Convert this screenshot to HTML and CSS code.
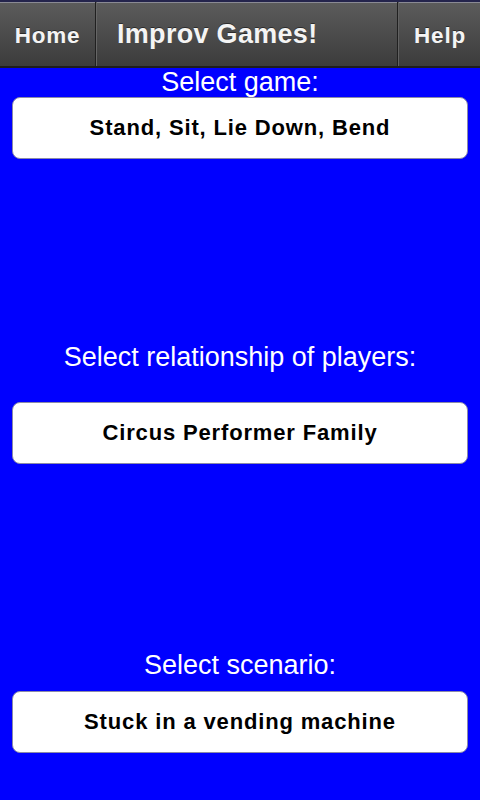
FILE: index.html
```html
<!DOCTYPE html>
<html lang="en">
<head>
<meta charset="utf-8">
<title>Improv Games!</title>
<link rel="stylesheet" href="styles.css">
</head>
<body>
<header class="topbar">
  <div class="nav-btn nav-home">Home</div>
  <div class="title">Improv Games!</div>
  <div class="nav-btn nav-help">Help</div>
</header>
<main class="content">
  <div class="label label-game">Select game:</div>
  <div class="picker picker-game">Stand, Sit, Lie Down, Bend</div>
  <div class="label label-rel">Select relationship of players:</div>
  <div class="picker picker-rel">Circus Performer Family</div>
  <div class="label label-scen">Select scenario:</div>
  <div class="picker picker-scen">Stuck in a vending machine</div>
</main>
</body>
</html>
```

FILE: styles.css
```css
html, body {
  margin: 0;
  padding: 0;
}
body {
  width: 480px;
  height: 800px;
  background: #0000ff;
  font-family: "Liberation Sans", Arial, sans-serif;
  overflow: hidden;
}
.topbar {
  box-sizing: border-box;
  height: 68px;
  display: flex;
  border-top: 2px solid #24244c;
  border-bottom: 2px solid #1e1e1e;
  background: linear-gradient(#5c5c5c, #3c3c3c);
  box-shadow: inset 0 1px 0 #8a8a94;
  color: #f4f4f4;
  font-weight: bold;
  text-shadow: 0 -1px 0 rgba(0,0,0,0.45);
}
.nav-btn {
  box-sizing: border-box;
  font-size: 22.5px;
  line-height: 26px;
  padding-top: 21px;
  letter-spacing: 0.8px;
  text-align: center;
}
.nav-home {
  width: 96px;
  border-right: 1px solid #202020;
}
.nav-help {
  width: 83px;
  border-left: 1px solid #202020;
  box-shadow: inset 1px 0 0 #626262;
  padding-left: 2px;
}
.title {
  flex: 1;
  font-size: 27px;
  line-height: 31px;
  padding-top: 17px;
  padding-left: 21px;
  letter-spacing: 0.3px;
  box-shadow: inset 1px 0 0 #666;
}
.content {
  display: flex;
  flex-direction: column;
}
.label {
  color: #ffffff;
  font-size: 27px;
  line-height: 29px;
  text-align: center;
}
.picker {
  box-sizing: border-box;
  height: 62px;
  margin-left: 12px;
  margin-right: 12px;
  background: #ffffff;
  border: 1px solid #8a8aa8;
  border-radius: 8px;
  display: flex;
  align-items: center;
  justify-content: center;
  color: #000;
  font-weight: bold;
  font-size: 22px;
  letter-spacing: 0.85px;
}
.label-rel { margin-top: 184px; }
.picker-rel { margin-top: 30px; }
.label-scen { margin-top: 187px; }
.picker-scen { margin-top: 11px; }
```
